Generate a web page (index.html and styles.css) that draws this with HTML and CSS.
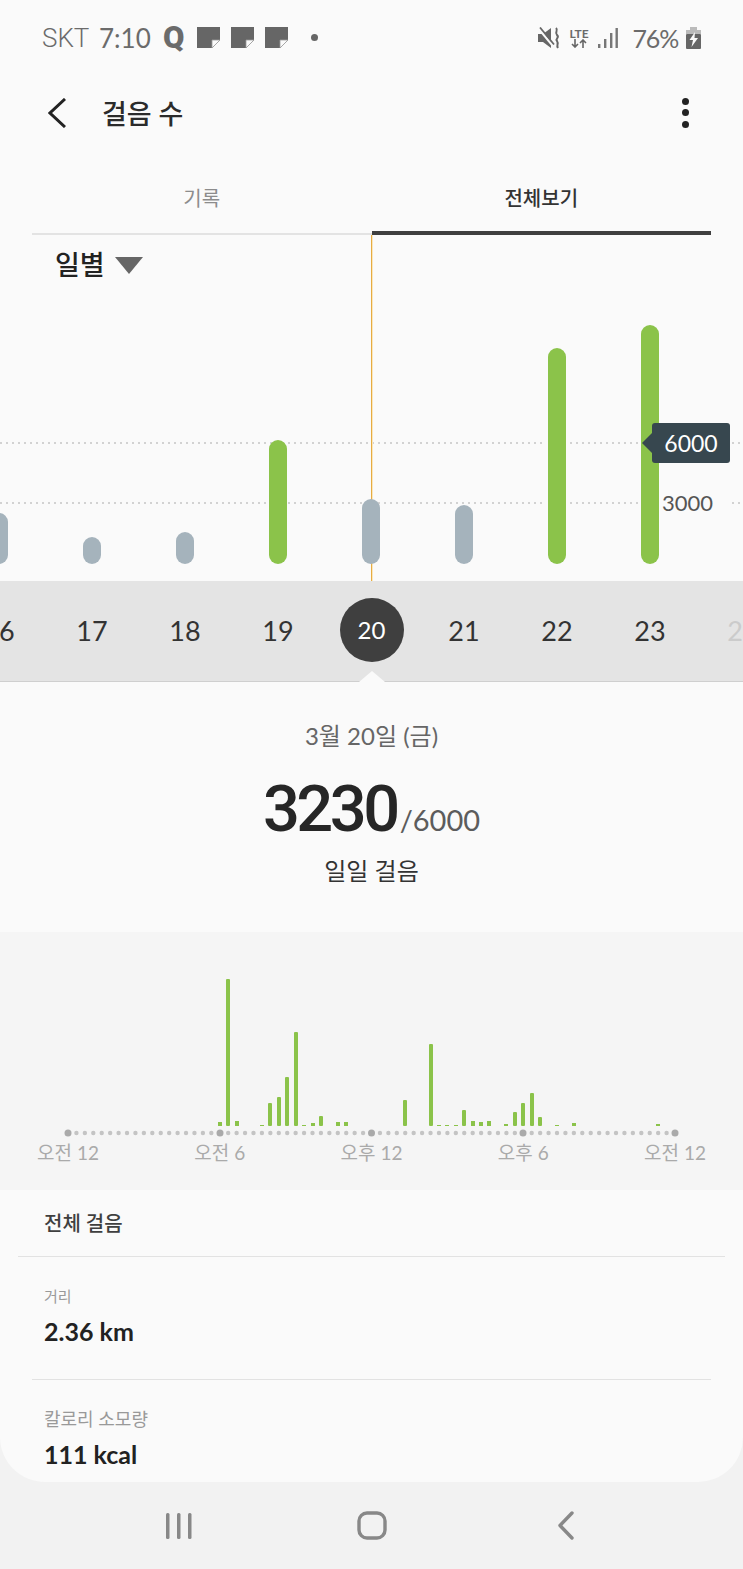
FILE: index.html
```html
<!doctype html>
<html lang="ko">
	<head>
		<title>걸음 수</title>
		<meta charset="utf8">
		<meta name="viewport" content="width=device-width">
		<link rel="stylesheet" href="styles.css">
	</head>
	<body>
		<div class="screen">
			<div class="card">
				<!-- status bar -->
				<div class="status">
					<div class="status-left">
						<span class="carrier">SKT</span>
						<span class="clock">7:10</span>
						<span class="status-q">Q</span>
						<svg class="note" width="23" height="21" viewBox="0 0 23 21"><path d="M0 0h23v13l-8 8H0z" fill="#666"/><path d="M15 21v-8h8z" fill="#fafafa" stroke="#999" stroke-width=".8"/></svg>
						<svg class="note" width="23" height="21" viewBox="0 0 23 21"><path d="M0 0h23v13l-8 8H0z" fill="#666"/><path d="M15 21v-8h8z" fill="#fafafa" stroke="#999" stroke-width=".8"/></svg>
						<svg class="note" width="23" height="21" viewBox="0 0 23 21"><path d="M0 0h23v13l-8 8H0z" fill="#666"/><path d="M15 21v-8h8z" fill="#fafafa" stroke="#999" stroke-width=".8"/></svg>
						<span class="status-dot"></span>
					</div>
					<div class="status-right">
						<svg width="22" height="22" viewBox="0 0 22 22" fill="none">
							<path d="M0 7h5l8-6v20l-8-6H0z" fill="#666"/>
							<path d="M1 2l14 17" stroke="#fafafa" stroke-width="2.400"/>
							<path d="M2 0.500l14 17" stroke="#666" stroke-width="1.800"/>
							<path d="M18 1c3 3-2 4 1 7s-2 3 0 6 -1 4 1 7" stroke="#666" stroke-width="2"/>
						</svg>
						<div class="lte">
							<span>LTE</span>
							<svg width="16" height="9" viewBox="0 0 16 9" fill="none" stroke="#666" stroke-width="1.600"><path d="M4 0v8M1 5l3 3 3-3M12 9V1M9 4l3-3 3 3"/></svg>
						</div>
						<svg class="signal" width="20" height="22" viewBox="0 0 20 22" fill="#777"><rect x="0" y="17" width="2.400" height="4"/><rect x="6" y="12" width="2.400" height="9"/><rect x="12" y="6" width="2.400" height="15"/><rect x="17.500" y="1" width="2.400" height="20"/></svg>
						<span class="battery-level">76%</span>
						<svg width="15" height="22" viewBox="0 0 15 22"><rect x="4" y="0" width="7" height="3" fill="#bbb"/><rect x="0" y="3" width="15" height="4" fill="#bbb"/><rect x="0" y="7" width="15" height="15" rx="1" fill="#666"/><path d="M9 5L3.500 13H7l-1.500 7L12 11H8.500z" fill="#fafafa"/></svg>
					</div>
				</div>

				<header class="appbar">
					<svg class="back" width="18" height="30" viewBox="0 0 18 30" fill="none" stroke="#222" stroke-width="3"><path d="M17 1L2 15l15 14"/></svg>
					<h1>걸음 수</h1>
					<div class="more"><i></i><i></i><i></i></div>
				</header>

				<nav class="tabs">
					<a class="tab">기록</a>
					<a class="tab tab-on">전체보기</a>
				</nav>

				<!-- daily chart -->
				<div class="plot">
					<div class="range">일별 <span class="caret"></span></div>
					<div class="guide guide-6000"></div>
					<div class="guide guide-3000"></div>
					<div class="cursor"></div>
					<div class="bars">
						<div class="col"><div class="bar" style="height:51px"></div></div>
						<div class="col"><div class="bar" style="height:27px"></div></div>
						<div class="col"><div class="bar" style="height:32px"></div></div>
						<div class="col"><div class="bar bar-goal" style="height:124px"></div></div>
						<div class="col"><div class="bar" style="height:65px"></div></div>
						<div class="col"><div class="bar" style="height:59px"></div></div>
						<div class="col"><div class="bar bar-goal bar-ring" style="height:216px"></div></div>
						<div class="col"><div class="bar bar-goal" style="height:239px"></div></div>
						<div class="col"></div>
					</div>
					<div class="goal-tip">6000</div>
					<div class="axis-label">3000</div>
				</div>

				<div class="days">
					<div class="day">16</div>
					<div class="day">17</div>
					<div class="day">18</div>
					<div class="day">19</div>
					<div class="day"><span class="day-on">20</span></div>
					<div class="day">21</div>
					<div class="day">22</div>
					<div class="day">23</div>
					<div class="day day-off">24</div>
					<div class="notch"></div>
				</div>

				<section class="summary">
					<div class="summary-date">3월 20일 (금)</div>
					<div class="summary-count"><strong>3230</strong><span>/6000</span></div>
					<div class="summary-label">일일 걸음</div>
				</section>

				<!-- steps per 20 minutes -->
				<section class="hourly">
					<svg class="hourly-chart" width="743" height="208" viewBox="0 932 743 208">
						<g fill="#8bc34a">
							<rect x="218" y="1122" width="4" height="4"/>
							<rect x="226" y="979" width="4" height="147" rx="1"/>
							<rect x="235" y="1121" width="4" height="5"/>
							<rect x="260" y="1125" width="4" height="1"/>
							<rect x="268" y="1103" width="4" height="23" rx="1"/>
							<rect x="277" y="1097" width="4" height="29" rx="1"/>
							<rect x="285" y="1077" width="4" height="49" rx="1"/>
							<rect x="294" y="1032" width="4" height="94" rx="1"/>
							<rect x="302" y="1125" width="4" height="1"/>
							<rect x="311" y="1123" width="4" height="3"/>
							<rect x="319" y="1116" width="4" height="10" rx="1"/>
							<rect x="336" y="1122" width="4" height="4"/>
							<rect x="344" y="1122" width="4" height="4"/>
							<rect x="403" y="1100" width="4" height="26" rx="1"/>
							<rect x="429" y="1044" width="4" height="82" rx="1"/>
							<rect x="437" y="1125" width="4" height="1"/>
							<rect x="445" y="1125" width="4" height="1"/>
							<rect x="454" y="1125" width="4" height="1"/>
							<rect x="462" y="1110" width="4" height="16" rx="1"/>
							<rect x="471" y="1121" width="4" height="5"/>
							<rect x="479" y="1122" width="4" height="4"/>
							<rect x="487" y="1121" width="4" height="5"/>
							<rect x="504" y="1124" width="4" height="2"/>
							<rect x="513" y="1112" width="4" height="14" rx="1"/>
							<rect x="521" y="1103" width="4" height="23" rx="1"/>
							<rect x="530" y="1093" width="4" height="33" rx="1"/>
							<rect x="538" y="1117" width="4" height="9" rx="1"/>
							<rect x="555" y="1125" width="4" height="1"/>
							<rect x="572" y="1123" width="4" height="3"/>
							<rect x="656" y="1124" width="4" height="2"/>
						</g>
						<line x1="68" y1="1133" x2="675" y2="1133" stroke="#c4c4c4" stroke-width="4.400" stroke-linecap="round" stroke-dasharray="0 8.431"/>
						<g fill="#aaa">
							<circle cx="68" cy="1133" r="3.500"/>
							<circle cx="220" cy="1133" r="3.500"/>
							<circle cx="371.500" cy="1133" r="3.500"/>
							<circle cx="523" cy="1133" r="3.500"/>
							<circle cx="675" cy="1133" r="3.500"/>
						</g>
					</svg>
					<div class="hours">
						<span class="hour"><b>오전 12</b></span>
						<span class="hour"><b>오전 6</b></span>
						<span class="hour"><b>오후 12</b></span>
						<span class="hour"><b>오후 6</b></span>
						<span class="hour"><b>오전 12</b></span>
					</div>
				</section>

				<section class="totals">
					<h2>전체 걸음</h2>
					<div class="stat">
						<div class="stat-name stat-name-small">거리</div>
						<div class="stat-value">2.36 km</div>
					</div>
					<div class="stat stat-last">
						<div class="stat-name">칼로리 소모량</div>
						<div class="stat-value">111 kcal</div>
					</div>
				</section>
			</div>

			<!-- soft keys -->
			<div class="softkeys">
				<svg width="28" height="28" viewBox="0 0 28 28" fill="#888"><rect x="1" y="1" width="3.500" height="26" rx="1.500"/><rect x="12" y="1" width="3.500" height="26" rx="1.500"/><rect x="23" y="1" width="3.500" height="26" rx="1.500"/></svg>
				<svg class="key-home" width="30" height="30" viewBox="0 0 30 30" fill="none" stroke="#888" stroke-width="3.400"><rect x="2" y="2" width="26" height="25" rx="8"/></svg>
				<svg class="key-back" width="18" height="30" viewBox="0 0 18 30" fill="none" stroke="#888" stroke-width="3.400" stroke-linecap="round" stroke-linejoin="round"><path d="M15 2L3 14.500 15 27"/></svg>
			</div>
		</div>
	</body>
</html>
```

FILE: styles.css
```css
html, body {
	padding: 0;
	margin: 0;
}
body {
	font-family: Lato, "Noto Sans CJK KR", sans-serif;
	background: #f2f2f2;
	color: #222;
}
.screen {
	width: 743px;
	height: 1569px;
	overflow: hidden;
}
.card {
	height: 1482px;
	background: #fafafa;
	border-radius: 0 0 45px 45px;
	overflow: hidden;
}

/* status bar */
.status {
	height: 75px;
	padding: 0 42px;
	display: flex;
	justify-content: space-between;
	align-items: center;
	color: #6b6b6b;
}
.status-left, .status-right {
	display: flex;
	align-items: center;
}
.carrier {
	font-family: Roboto, sans-serif;
	font-size: 26px;
	font-weight: 300;
	width: 57px;
}
.clock {
	font-size: 26px;
	width: 64px;
}
.status-q {
	font-family: Roboto, sans-serif;
	font-size: 31px;
	font-weight: 900;
	width: 34px;
}
.note {
	margin-right: 11px;
}
.status-dot {
	width: 7px;
	height: 7px;
	border-radius: 50%;
	background: #666;
	margin-left: 12px;
}
.lte {
	margin-left: 9px;
	width: 21px;
	display: flex;
	flex-direction: column;
	align-items: center;
	font-size: 12px;
	line-height: 11px;
	font-weight: 700;
}
.signal {
	margin-left: 8px;
}
.battery-level {
	font-size: 25px;
	letter-spacing: -1.200px;
	margin: 0 8px 0 15px;
}

/* app bar */
.appbar {
	height: 75px;
	padding: 0 54px 0 48px;
	display: flex;
	align-items: center;
}
.appbar h1 {
	margin: 0 0 0 36px;
	font-size: 27px;
	font-weight: 500;
	flex: 1;
	color: #2b2b2b;
}
.more i {
	display: block;
	width: 7px;
	height: 7px;
	border-radius: 50%;
	background: #222;
	margin: 4.500px 0;
}

/* tabs */
.tabs {
	height: 85px;
	padding: 0 32px;
	display: flex;
}
.tab {
	flex: 1;
	display: flex;
	align-items: center;
	justify-content: center;
	padding-top: 11px;
	box-sizing: border-box;
	height: 85px;
	font-size: 20px;
	color: #8c8c8c;
	border-bottom: 2px solid #e3e3e3;
	margin-bottom: -1px;
}
.tab-on {
	color: #333;
	font-weight: 500;
	border-bottom: 4px solid #3f3f3f;
	padding-top: 13px;
}

/* daily bars */
.plot {
	position: relative;
	height: 346px;
	overflow: hidden;
}
.range {
	position: absolute;
	left: 55px;
	top: 10px;
	display: flex;
	align-items: center;
	gap: 10px;
	font-size: 27px;
	font-weight: 500;
	line-height: 40px;
	white-space: nowrap;
}
.caret {
	width: 0;
	height: 0;
	border-left: 14px solid transparent;
	border-right: 14px solid transparent;
	border-top: 17px solid #666;
}
.guide {
	position: absolute;
	left: 0;
	right: 0;
	height: 2px;
	background: repeating-linear-gradient(90deg, #d2d2d2 0 2px, transparent 2px 6px);
}
.guide-6000 {
	top: 207px;
}
.guide-3000 {
	top: 267px;
}
.cursor {
	position: absolute;
	left: 371px;
	top: 0;
	bottom: 0;
	width: 2px;
	background: linear-gradient(90deg, #e6ac42 50%, #fbe7bd 50%);
}
.bars {
	position: relative;
	display: flex;
	height: 329px;
	margin-left: -47.500px;
	width: 837px;
}
.col {
	width: 93px;
	display: flex;
	justify-content: center;
	align-items: flex-end;
}
.bar {
	width: 18px;
	border-radius: 9px;
	background: #a5b3bc;
}
.bar-goal {
	background: #8bc34a;
}
.bar-ring {
	box-shadow: 0 0 0 2px #fafafa;
}
.goal-tip {
	position: absolute;
	left: 652px;
	top: 188px;
	width: 78px;
	height: 40px;
	border-radius: 3px;
	background: #37474f;
	color: #fff;
	font-size: 23px;
	line-height: 40px;
	text-align: center;
}
.goal-tip:before {
	content: "";
	position: absolute;
	left: -10px;
	top: 10px;
	border-top: 10px solid transparent;
	border-bottom: 10px solid transparent;
	border-right: 10px solid #37474f;
}
.axis-label {
	position: absolute;
	left: 660px;
	top: 254px;
	width: 67px;
	padding-left: 2px;
	background: #fafafa;
	color: #555;
	font-size: 22px;
	line-height: 28px;
}

/* day strip */
.days {
	position: relative;
	height: 100px;
	display: flex;
	margin-left: -47.500px;
	width: 837px;
	background: #e4e4e4;
	box-shadow: 0 1px 0 #cfcfcf;
}
.day {
	width: 93px;
	display: flex;
	align-items: center;
	justify-content: center;
	font-size: 27px;
	color: #333;
	padding-bottom: 2px;
	box-sizing: border-box;
}
.day-off {
	color: #cbcbcb;
}
.day-on {
	flex: none;
	width: 64px;
	height: 64px;
	border-radius: 50%;
	background: #3f3f3f;
	color: #fff;
	font-size: 24px;
	line-height: 64px;
	text-align: center;
	margin-left: 1px;
}
.notch {
	position: absolute;
	left: 406px;
	bottom: -1px;
	border-left: 13px solid transparent;
	border-right: 13px solid transparent;
	border-bottom: 11px solid #fafafa;
}

/* selected day */
.summary {
	height: 251px;
	box-sizing: border-box;
	padding-top: 37px;
	text-align: center;
}
.summary-date {
	font-size: 24px;
	line-height: 36px;
	color: #666;
}
.summary-count {
	margin-top: 20px;
	line-height: 70px;
	height: 70px;
	color: #5c5c5c;
}
.summary-count strong {
	font-family: Roboto, sans-serif;
	font-size: 65px;
	font-weight: 500;
	letter-spacing: -3.500px;
	color: #262626;
}
.summary-count span {
	font-size: 29px;
	margin-left: 3px;
}
.summary-label {
	margin-top: 8px;
	font-size: 24px;
	line-height: 38px;
	color: #333;
}

/* hour chart */
.hourly {
	height: 258px;
	background: #f5f5f5;
}
.hourly-chart {
	display: block;
}
.hours {
	padding: 0 68px;
	display: flex;
	justify-content: space-between;
}
.hour {
	width: 0;
	display: flex;
	justify-content: center;
}
.hour b {
	flex: none;
	font-weight: 400;
	font-size: 19px;
	line-height: 26px;
	color: #aaa;
	white-space: nowrap;
}

/* totals */
.totals h2 {
	margin: 0 18px;
	padding-left: 26px;
	height: 66px;
	line-height: 66px;
	font-size: 20px;
	font-weight: 500;
	color: #3f3f3f;
	border-bottom: 1px solid #e2e2e2;
}
.stat {
	margin: 0 32px;
	padding-left: 12px;
	height: 123px;
	box-sizing: border-box;
	padding-top: 26px;
	border-bottom: 1px solid #e2e2e2;
}
.stat-last {
	border: 0;
}
.stat-name {
	font-size: 18px;
	line-height: 26px;
	color: #999;
}
.stat-name-small {
	font-size: 15px;
}
.stat-value {
	margin-top: 4px;
	font-size: 25px;
	font-weight: 700;
	line-height: 36px;
	color: #222;
}

/* soft keys */
.softkeys {
	height: 87px;
	padding-left: 165px;
	display: flex;
	align-items: center;
}
.key-home {
	margin-left: 164px;
}
.key-back {
	margin-left: 170px;
}
```
